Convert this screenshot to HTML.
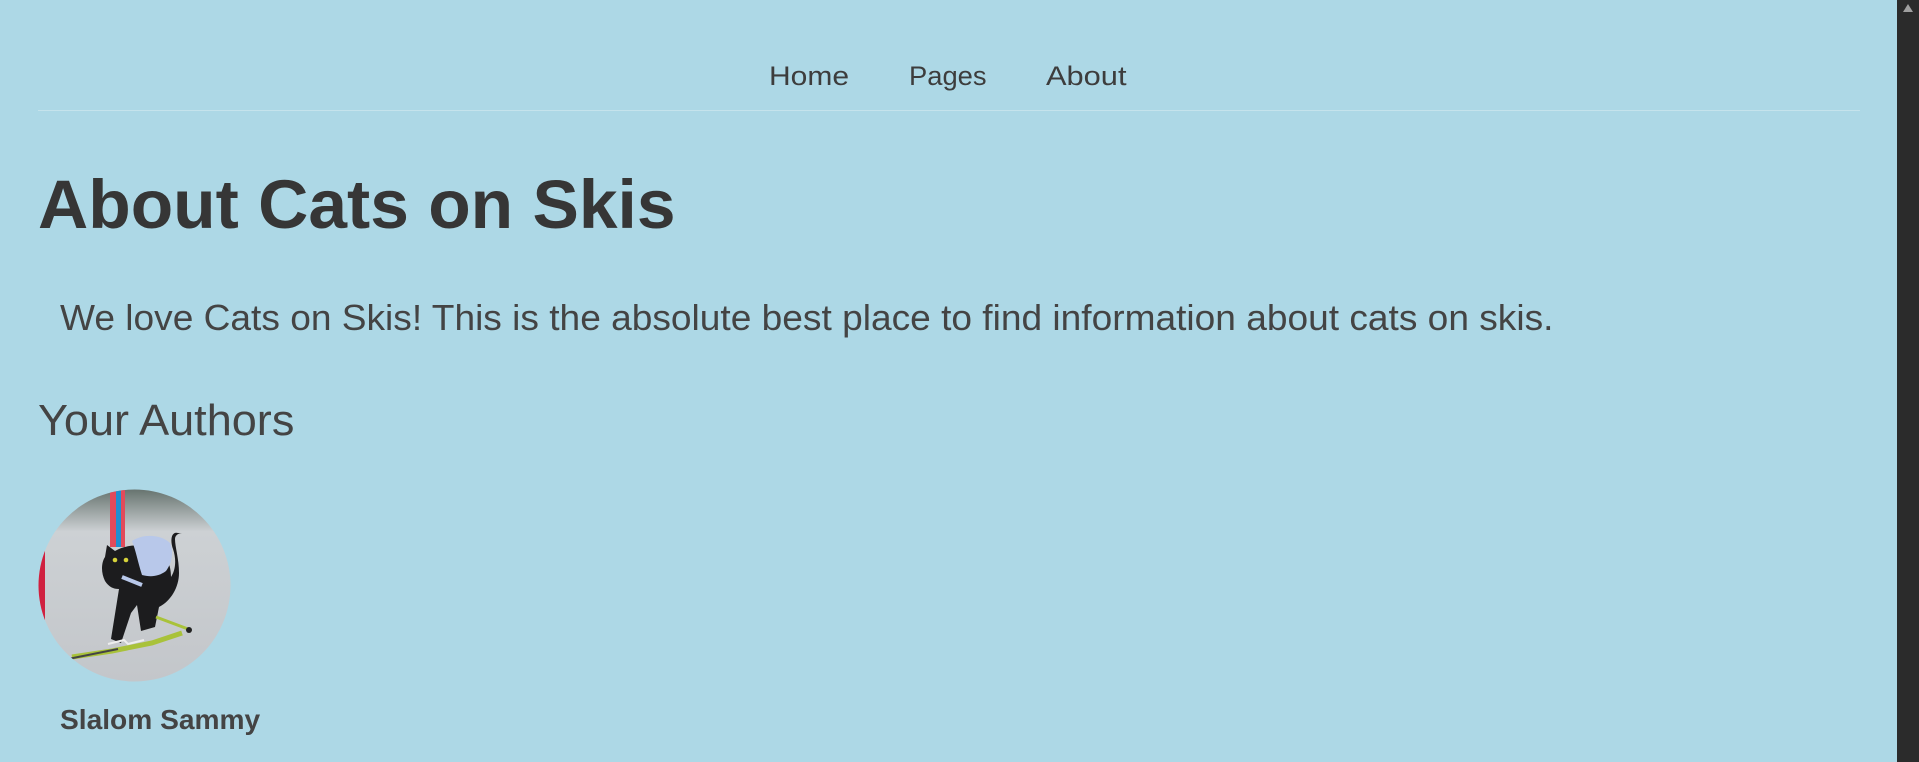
<!DOCTYPE html>
<html><head><meta charset="utf-8"><style>
html,body{margin:0;padding:0;width:1919px;height:762px;overflow:hidden;background:#add8e6;font-family:"Liberation Sans",sans-serif;color:#333;}
.t{position:absolute;white-space:nowrap;line-height:1;transform-origin:0 0;}
.hr{position:absolute;left:38px;top:110px;width:1822px;height:1px;background:#c5e3ec;}
.sb{position:absolute;left:1897px;top:0;width:22px;height:762px;background:#2b2b2b;}
.sb:after{content:"";position:absolute;left:6px;top:4px;border-left:5px solid transparent;border-right:5px solid transparent;border-bottom:8px solid #a0a0a0;}
</style></head><body>
<div class="t" id="n1" style="left:769px;top:63px;font-size:27px;color:#3d3d3d">Home</div>
<div class="t" id="n2" style="left:909px;top:63px;font-size:27px;color:#3d3d3d">Pages</div>
<div class="t" id="n3" style="left:1046px;top:63px;font-size:27px;color:#3d3d3d">About</div>
<div class="hr"></div>
<div class="t" id="h1" style="left:38px;top:170px;font-size:69px;font-weight:bold;color:#363636">About Cats on Skis</div>
<div class="t" id="p" style="left:60px;top:300px;font-size:36px;color:#444">We love Cats on Skis! This is the absolute best place to find information about cats on skis.</div>
<div class="t" id="h2" style="left:38px;top:399px;font-size:44px;color:#444">Your Authors</div>
<svg style="position:absolute;left:38px;top:489px" width="193" height="193" viewBox="0 0 193 193">
<defs><clipPath id="c"><circle cx="96.5" cy="96.5" r="96"/></clipPath>
<linearGradient id="g" x1="0" y1="0" x2="0" y2="1"><stop offset="0" stop-color="#66736e"/><stop offset="0.22" stop-color="#cdd1d4"/><stop offset="1" stop-color="#c3c6ca"/></linearGradient></defs>
<g clip-path="url(#c)">
<rect width="193" height="193" fill="url(#g)"/>
<rect x="0" y="55" width="7" height="90" fill="#d0203f"/>
<rect x="72" y="0" width="6" height="58" fill="#e24a5a"/>
<rect x="78" y="0" width="5" height="58" fill="#1f8fd0"/>
<rect x="83" y="0" width="4" height="58" fill="#e24a5a"/>
<path d="M140 44c-7-2-8 8-5 16 4 12 2 22-2 28 0-12-4-22-16-28-14-6-30-4-40 2l-8-6-2 12c-4 6-4 16 0 24 4 6 8 8 14 8l-8 50 10 4 10-30 6-8 4 26 14-4 4-20c12-6 20-20 20-34 0-14-4-26-4-34 0-4 4-6 7-6z" fill="#1c1c1e"/>
<path d="M94 52c12-8 30-6 38 2 4 10 2 20-4 28-8 6-16 6-24 4-4-12-6-24-10-34z" fill="#b8c8ea"/>
<path d="M84 88l20 8" stroke="#b8c8ea" stroke-width="4"/>
<circle cx="77" cy="71" r="2.3" fill="#d6d23a"/><circle cx="88" cy="71" r="2.3" fill="#d6d23a"/>
<path d="M34 168l40-6 40-8 30-10" stroke="#a9c23a" stroke-width="5" fill="none"/>
<path d="M30 170l50-10" stroke="#444" stroke-width="2"/>
<path d="M118 128l32 12" stroke="#a9c23a" stroke-width="3"/>
<circle cx="151" cy="141" r="3" fill="#222"/>
<path d="M70 155l16-4 4 4 16-4" stroke="#eee" stroke-width="2" fill="none"/>
</g></svg>
<div class="t" id="nm" style="left:60px;top:706px;font-size:28px;font-weight:bold;color:#444">Slalom Sammy</div>
<div class="sb"></div>
<script>
var W={n1:80,n2:78,n3:81,h1:638,p:1493,h2:256,nm:200};
for(var k in W){var e=document.getElementById(k);var w=e.offsetWidth;if(w)e.style.transform="scaleX("+(W[k]/w)+")";}
</script>
</body></html>
